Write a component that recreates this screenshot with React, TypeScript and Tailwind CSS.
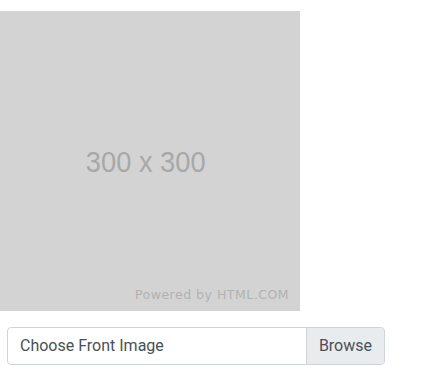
export default function App() {
  return (
    <div className="min-h-[372px] bg-white pt-[11px] font-['Roboto','Liberation_Sans',sans-serif]">
      <div className="relative flex h-[300px] w-[300px] items-center justify-center bg-[#d3d3d3]">
        <span className="mr-[8px] mt-[3px] scale-x-[0.94] font-['Liberation_Sans',sans-serif] text-[29px] text-[#a8a8a8]">300 x 300</span>
        <span className="absolute bottom-[6px] right-[11px] font-['DejaVu_Sans',sans-serif] text-[12.5px] tracking-[0.5px] text-[#b2b2b2]">
          Powered by HTML.COM
        </span>
      </div>
      <div className="ml-[7px] mt-[16px] flex h-[38px] w-[378px] overflow-hidden rounded-[4px] border border-[#ced4da]">
        <div className="flex flex-1 items-center px-3 text-[16px] text-[#495057]">Choose Front Image</div>
        <div className="flex items-center border-l border-[#ced4da] bg-[#e9ecef] px-3 text-[16px] text-[#495057]">Browse</div>
      </div>
    </div>
  );
}
